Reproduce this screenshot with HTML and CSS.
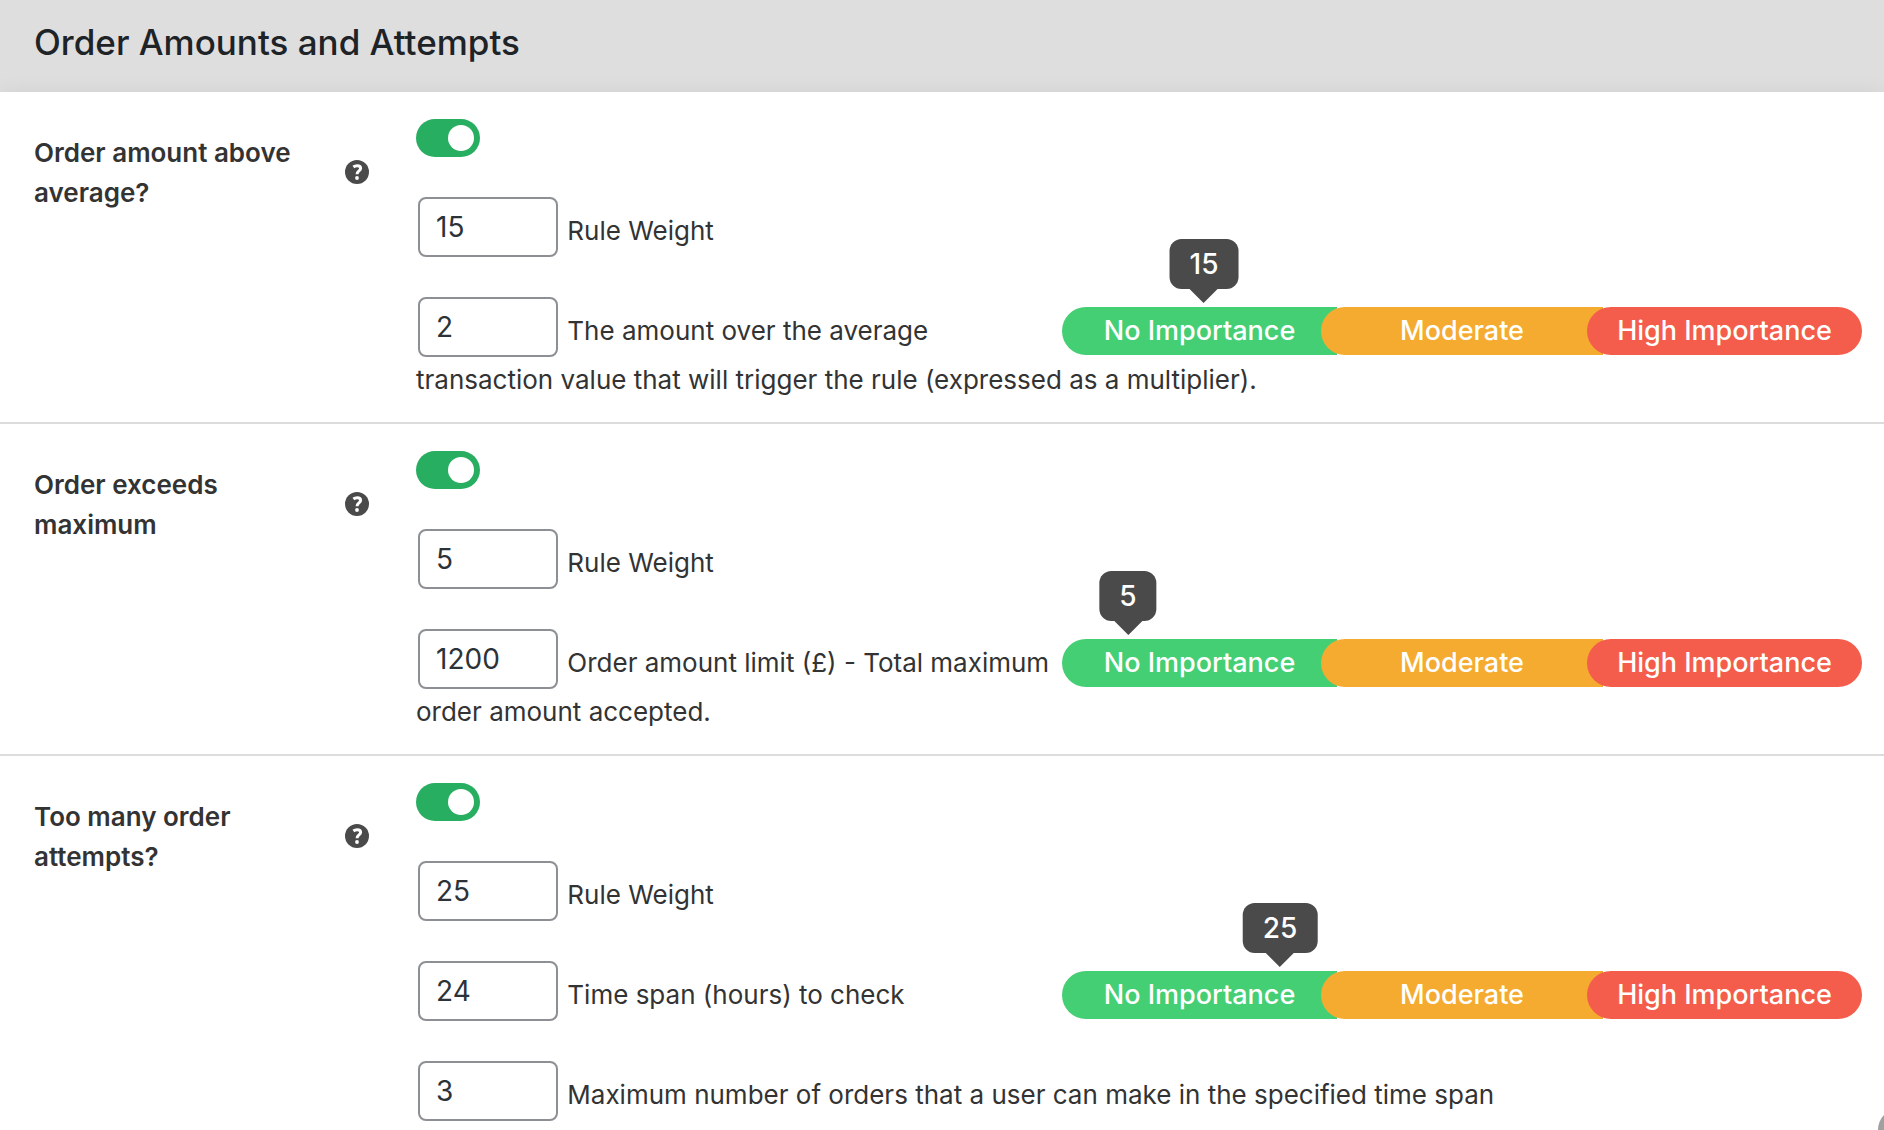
FILE: index.html
```html
<!DOCTYPE html>
<html lang="en">
<head>
  <meta charset="UTF-8">
  <meta name="viewport" content="width=device-width, initial-scale=1.0">
  <title>Order Amounts and Attempts</title>
  <link rel="stylesheet" href="styles.css">
</head>
<body>
  <header class="section-header">
    <h2>Order Amounts and Attempts</h2>
  </header>

  <form class="settings">
    <!-- Order amount above average -->
    <section class="rule">
      <div class="rule-title">
        <label for="avgEnabled">Order amount above average?</label>
        <svg class="help" viewBox="0 0 24 24" role="img" aria-label="Help">
          <circle cx="12" cy="12" r="12"/>
          <path d="M8.4 7C9.5 6.1 10.8 5.7 12.2 5.7C14.3 5.7 15.6 6.7 15.6 8.4C15.6 10.9 12.1 11.1 12.1 14.2"/>
          <circle class="dot" cx="12" cy="18" r="1.9"/>
        </svg>
      </div>
      <div class="rule-body">
        <input type="checkbox" class="toggle" id="avgEnabled" checked>
        <div class="field">
          <input type="text" inputmode="numeric" id="avgWeight" value="15">
          <label for="avgWeight">Rule Weight</label>
        </div>
        <div class="field">
          <div class="scale">
            <output class="bubble" for="avgWeight" style="--weight: 15">15</output>
            <span class="level low">No Importance</span>
            <span class="level medium">Moderate</span>
            <span class="level high">High Importance</span>
          </div>
          <input type="text" inputmode="numeric" id="avgMultiplier" value="2">
          <label for="avgMultiplier">The amount over the average transaction value that will trigger the rule (expressed as a multiplier).</label>
        </div>
      </div>
    </section>

    <!-- Order exceeds maximum -->
    <section class="rule">
      <div class="rule-title">
        <label for="maxEnabled">Order exceeds maximum</label>
        <svg class="help" viewBox="0 0 24 24" role="img" aria-label="Help">
          <circle cx="12" cy="12" r="12"/>
          <path d="M8.4 7C9.5 6.1 10.8 5.7 12.2 5.7C14.3 5.7 15.6 6.7 15.6 8.4C15.6 10.9 12.1 11.1 12.1 14.2"/>
          <circle class="dot" cx="12" cy="18" r="1.9"/>
        </svg>
      </div>
      <div class="rule-body">
        <input type="checkbox" class="toggle" id="maxEnabled" checked>
        <div class="field">
          <input type="text" inputmode="numeric" id="maxWeight" value="5">
          <label for="maxWeight">Rule Weight</label>
        </div>
        <div class="field">
          <div class="scale">
            <output class="bubble" for="maxWeight" style="--weight: 5">5</output>
            <span class="level low">No Importance</span>
            <span class="level medium">Moderate</span>
            <span class="level high">High Importance</span>
          </div>
          <input type="text" inputmode="numeric" id="maxAmount" value="1200">
          <label for="maxAmount">Order amount limit (£) - Total maximum order amount accepted.</label>
        </div>
      </div>
    </section>

    <!-- Too many order attempts -->
    <section class="rule">
      <div class="rule-title">
        <label for="attemptsEnabled">Too many order attempts?</label>
        <svg class="help" viewBox="0 0 24 24" role="img" aria-label="Help">
          <circle cx="12" cy="12" r="12"/>
          <path d="M8.4 7C9.5 6.1 10.8 5.7 12.2 5.7C14.3 5.7 15.6 6.7 15.6 8.4C15.6 10.9 12.1 11.1 12.1 14.2"/>
          <circle class="dot" cx="12" cy="18" r="1.9"/>
        </svg>
      </div>
      <div class="rule-body">
        <input type="checkbox" class="toggle" id="attemptsEnabled" checked>
        <div class="field">
          <input type="text" inputmode="numeric" id="attemptsWeight" value="25">
          <label for="attemptsWeight">Rule Weight</label>
        </div>
        <div class="field">
          <div class="scale">
            <output class="bubble" for="attemptsWeight" style="--weight: 25">25</output>
            <span class="level low">No Importance</span>
            <span class="level medium">Moderate</span>
            <span class="level high">High Importance</span>
          </div>
          <input type="text" inputmode="numeric" id="attemptsSpan" value="24">
          <label for="attemptsSpan">Time span (hours) to check</label>
        </div>
        <div class="field">
          <input type="text" inputmode="numeric" id="attemptsMax" value="3">
          <label for="attemptsMax">Maximum number of orders that a user can make in the specified time span</label>
        </div>
      </div>
    </section>
  </form>

  <button type="button" class="corner-btn" aria-label="Back to top"></button>
</body>
</html>
```

FILE: styles.css
```css
* {
  box-sizing: border-box;
}

html {
  scrollbar-width: none;
}

body {
  margin: 0;
  font-family: Inter, "Liberation Sans", sans-serif;
  font-size: 26px;
  line-height: 46px;
  color: #333333;
  background-color: #ffffff;
}

.section-header {
  padding: 20px 34px 28px;
  background-color: #dedede;
}

.section-header h2 {
  margin: 0;
  font-size: 35px;
  font-weight: 500;
  line-height: 44px;
  color: #1d2327;
}

.settings {
  background-color: #ffffff;
  box-shadow: 0 0 20px rgba(0, 0, 0, 0.06);
}

.rule {
  display: flex;
  padding: 27px 22px 19px 34px;
  border-bottom: 2px solid #dcdcdc;
}

.rule-title {
  display: flex;
  flex: none;
  width: 382px;
  padding-top: 14px;
  line-height: 40px;
  font-weight: 600;
}

.rule-title label {
  width: 300px;
  margin-right: 11px;
}

.help {
  flex: none;
  width: 24px;
  height: 24px;
  margin-top: 27px;
  fill: #4a4a4a;
}

.help path {
  fill: none;
  stroke: #ffffff;
  stroke-width: 3;
}

.help .dot {
  fill: #ffffff;
}

.rule-body {
  flex: 1;
  min-width: 0;
}

.toggle {
  appearance: none;
  display: flex;
  align-items: center;
  width: 64px;
  height: 38px;
  margin: 0;
  padding: 0 6px;
  border-radius: 19px;
  background-color: #bbbbbb;
  cursor: pointer;
}

.toggle::before {
  content: "";
  width: 26px;
  height: 26px;
  border-radius: 50%;
  background-color: #ffffff;
}

.toggle:checked {
  justify-content: flex-end;
  background-color: #27ae60;
}

.field {
  margin-top: 40px;
}

.field input {
  width: 140px;
  height: 60px;
  margin: 0 2px;
  padding: 0 16px;
  border: 2px solid #8c8f94;
  border-radius: 8px;
  font-family: inherit;
  font-size: 28px;
  color: #2c3338;
  background-color: #ffffff;
  vertical-align: 3px;
}

.scale {
  position: relative;
  float: right;
  display: grid;
  grid-template-columns: 259px 1fr 275px;
  width: 800px;
  max-width: 100%;
  height: 48px;
  margin: 10px 0 0 4px;
}

.level {
  position: relative;
  margin-right: -16px;
  border-radius: 24px 0 0 24px;
  font-size: 27px;
  font-weight: 500;
  line-height: 48px;
  text-align: center;
  color: #ffffff;
}

.low {
  background-color: #44cf74;
}

.medium {
  background-color: #f5ab2f;
}

.high {
  margin-right: 0;
  border-radius: 24px;
  background-color: #f45c4b;
}

/* weight bubble above the scale */
.bubble {
  position: absolute;
  bottom: 66px;
  left: calc(28px + var(--weight) * 95% / 100);
  padding: 0 20px;
  border-radius: 12px;
  font-size: 28px;
  font-weight: 500;
  line-height: 50px;
  color: #ffffff;
  background-color: #4a4a4a;
  transform: translateX(-50%);
}

.bubble::after {
  content: "";
  position: absolute;
  top: 100%;
  left: 50%;
  margin-left: -14px;
  border: 14px solid transparent;
  border-bottom: none;
  border-top-color: #4a4a4a;
}

.corner-btn {
  position: fixed;
  right: -38px;
  bottom: -22px;
  width: 44px;
  height: 44px;
  border: none;
  border-radius: 50%;
  background-color: #a0a0a0;
}
```
